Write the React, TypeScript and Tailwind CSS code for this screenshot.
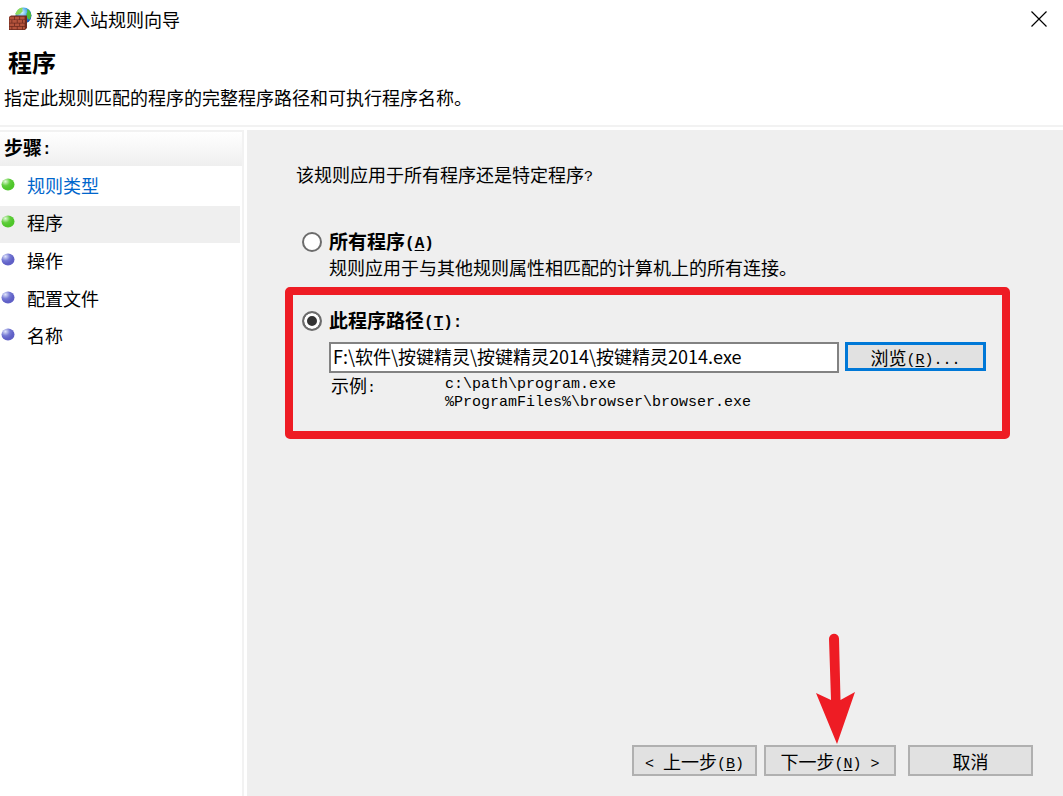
import React, { useState } from 'react';

const steps = [
  { name: '规则类型', state: 'link', done: true },
  { name: '程序', state: 'current', done: true },
  { name: '操作', state: 'todo', done: false },
  { name: '配置文件', state: 'todo', done: false },
  { name: '名称', state: 'todo', done: false },
];

function FirewallIcon() {
  return (
    <svg width="24" height="24" viewBox="0 0 24 24" aria-hidden="true">
      <defs>
        <radialGradient id="globe" cx="0.4" cy="0.3" r="0.75">
          <stop offset="0" stopColor="#d8f4ff" />
          <stop offset="0.5" stopColor="#3f9fe8" />
          <stop offset="1" stopColor="#0b48a8" />
        </radialGradient>
      </defs>
      <circle cx="15.5" cy="8.5" r="8" fill="url(#globe)" />
      <path d="M9 4c2-3 4-3.500 6-3l-1 2 1 1-3 3-3 1-2-1z" fill="#8edc5a" />
      <path d="M19 2c3 1 4 4 4.300 7l-2 4-2-2-1-4 1-2z" fill="#4dbb3c" />
      <path d="M1 10l2-1.500h16V21l-2 2H1z" fill="#6d2a1e" />
      <path
        d="M1.500 9.800h4.500v2.600H1.500zM6.800 9.800h4.500v2.600H6.800zM12.100 9.800h4.500v2.600h-4.500zM1.500 13.100h2v2.600h-2zM4.300 13.100h4.500v2.600H4.300zM9.600 13.100h4.500v2.600H9.600zM14.900 13.100h2v2.600h-2zM1.500 16.400h4.500v2.600H1.500zM6.800 16.400h4.500v2.600H6.800zM12.100 16.400h4.500v2.600h-4.500zM1.500 19.700h2v2.600h-2zM4.300 19.700h4.500v2.600H4.300zM9.600 19.700h4.500v2.600H9.600zM14.900 19.700h2v2.600h-2z"
        fill="#b4533c"
      />
    </svg>
  );
}

function Bullet({ done }: { done: boolean }) {
  const id = done ? 'ball-green' : 'ball-blue';
  return (
    <svg width="14" height="14" viewBox="0 0 14 14" aria-hidden="true" className="shrink-0">
      <defs>
        <radialGradient id={id} cx="0.3" cy="0.25" r="0.6">
          <stop offset="0" stopColor={done ? '#e2f8d8' : '#dfe4fa'} />
          <stop offset="0.6" stopColor={done ? '#5fce3c' : '#7478d4'} />
          <stop offset="1" stopColor={done ? '#4fc62b' : '#6060c6'} />
        </radialGradient>
      </defs>
      <ellipse cx="7" cy="6.500" rx="6.500" ry="6" fill={`url(#${id})`} />
    </svg>
  );
}

function Mono({ children, strong = false }: { children: React.ReactNode; strong?: boolean }) {
  return (
    <span
      className={
        strong
          ? "align-[1px] font-['Liberation_Mono',monospace] text-[16px] leading-none"
          : "align-[1px] font-['Liberation_Mono',monospace] text-[15px] leading-none"
      }
    >
      {children}
    </span>
  );
}

function Key({ letter, strong = false }: { letter: string; strong?: boolean }) {
  return (
    <Mono strong={strong}>
      (<span className="underline underline-offset-2">{letter}</span>)
    </Mono>
  );
}

const radioClass =
  'm-0 h-5 w-5 shrink-0 appearance-none rounded-full border-2 border-[#6c6c6c] bg-white checked:bg-[#333] checked:shadow-[inset_0_0_0_3px_#fff]';
const radioLabelClass =
  'flex h-[26px] items-center gap-[7px] text-[19px] font-bold leading-[26px]';
const buttonClass =
  'h-[31px] whitespace-pre border-2 border-[#b0b0b0] bg-[#e1e1e1] text-[18px] leading-[26px]';

export default function App() {
  const [mode, setMode] = useState('path');
  const [path, setPath] = useState('F:\\软件\\按键精灵\\按键精灵2014\\按键精灵2014.exe');

  return (
    <div className="flex min-h-screen flex-col bg-white font-['Noto_Sans_CJK_SC',sans-serif] text-[18px] leading-6 text-black">
      <header className="border-b-2 border-[#f2f2f2]">
        <div className="flex h-10 items-center justify-between pb-0.5 pl-2 pr-4">
          <div className="flex items-center gap-1">
            <FirewallIcon />
            <span>新建入站规则向导</span>
          </div>
          <button type="button" aria-label="关闭" className="flex h-6 w-4 items-center justify-center">
            <svg width="16" height="16" viewBox="0 0 16 16" aria-hidden="true">
              <path d="M0.500 0.500l15 15M15.500 0.500l-15 15" stroke="#000" strokeWidth="1.200" />
            </svg>
          </button>
        </div>
        <h1 className="pl-2 pt-1.5 text-[24px] font-bold leading-8">程序</h1>
        <p className="pb-4 pl-1 pt-[7px]">指定此规则匹配的程序的完整程序路径和可执行程序名称。</p>
      </header>

      <div className="flex flex-1 gap-[3px] pt-[3px]">
        <nav className="w-[244px] shrink-0 border-r-2 border-t-2 border-[#f2f2f2]">
          <h2 className="flex h-[34px] items-center bg-linear-to-b from-white to-[#efefef] pb-1 pl-1 text-[19px] font-bold">
            <span>
              步骤<Mono strong>:</Mono>
            </span>
          </h2>
          <ul className="mr-0.5 mt-0.5 grid h-[188px] grid-rows-5">
            {steps.map((step) => (
              <li
                key={step.name}
                className={
                  step.state === 'current'
                    ? 'flex items-center gap-3 bg-[#efefef] pb-1 pl-px'
                    : 'flex items-center gap-3 pb-1 pl-px'
                }
              >
                <Bullet done={step.done} />
                {step.state === 'link' ? (
                  <a href="#type" className="text-[#0066cc]">
                    {step.name}
                  </a>
                ) : (
                  <span>{step.name}</span>
                )}
              </li>
            ))}
          </ul>
        </nav>

        <main className="flex flex-1 flex-col bg-[#efefef] pb-5 pl-[38px] pr-[30px]">
          <p className="pl-[11px] pt-8">
            该规则应用于所有程序还是特定程序<Mono>?</Mono>
          </p>

          <div className="mt-[43px] pl-[17px]">
            <label className={radioLabelClass}>
              <input
                type="radio"
                name="scope"
                className={radioClass}
                checked={mode === 'all'}
                onChange={() => setMode('all')}
              />
              <span className="pb-0.5">
                所有程序
                <Key letter="A" strong />
              </span>
            </label>
            <p className="pl-[27px]">规则应用于与其他规则属性相匹配的计算机上的所有连接。</p>
          </div>

          <section className="mr-[23px] mt-2 h-[152px] rounded-[5px] border-8 border-[#ee1c24] pl-[9px] pr-4 pt-[13px]">
            <label className={radioLabelClass}>
              <input
                type="radio"
                name="scope"
                className={radioClass}
                checked={mode === 'path'}
                onChange={() => setMode('path')}
              />
              <span className="pb-0.5">
                此程序路径
                <Key letter="T" strong />
                <Mono strong>:</Mono>
              </span>
            </label>
            <div className="mt-2 flex gap-1.5 pl-[27px]">
              <input
                type="text"
                aria-label="此程序路径"
                value={path}
                onChange={(e) => setPath(e.target.value)}
                className="h-[31px] min-w-0 flex-1 border-2 border-[#828282] bg-white px-0.5 pb-1 outline-none"
              />
              <button
                type="button"
                className="h-[29px] w-[141px] border-[3px] border-[#0078d7] bg-[#e1e1e1] text-[18px] leading-[22px]"
              >
                浏览
                <Key letter="R" />
                <Mono>...</Mono>
              </button>
            </div>
            <div className="flex pl-[29px] pt-[3px]">
              <span className="w-[114px] leading-[18px]">
                示例<Mono>:</Mono>
              </span>
              <div className="font-['Liberation_Mono',monospace] text-[15px] leading-[18px]">
                <p>c:\path\program.exe</p>
                <p>%ProgramFiles%\browser\browser.exe</p>
              </div>
            </div>
          </section>

          <footer className="mt-auto flex justify-end">
            <button type="button" className={`${buttonClass} w-[125px]`}>
              <Mono>&lt; </Mono>上一步
              <Key letter="B" />
            </button>
            <div className="relative ml-[7px]">
              <button type="button" className={`${buttonClass} w-[132px]`}>
                下一步
                <Key letter="N" />
                <Mono> &gt;</Mono>
              </button>
              <svg
                className="pointer-events-none absolute bottom-8 left-[52px]"
                width="40"
                height="111"
                viewBox="0 0 40 111"
                aria-hidden="true"
              >
                <path
                  d="M13 6a5 5 0 0 1 10-0.500L24.500 67 39 59 21 111 0 60 15 67z"
                  fill="#ee1c24"
                />
              </svg>
            </div>
            <button type="button" className={`${buttonClass} ml-3 w-[125px]`}>
              取消
            </button>
          </footer>
        </main>
      </div>
    </div>
  );
}
